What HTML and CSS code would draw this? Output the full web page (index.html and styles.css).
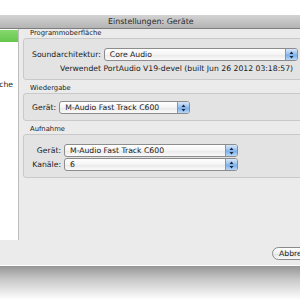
FILE: index.html
```html
<!DOCTYPE html>
<html>
<head>
<meta charset="utf-8">
<link rel="stylesheet" href="styles.css">
</head>
<body>
<div class="window">
  <div class="titlebar">Einstellungen: Geräte</div>
  <div class="body">
    <div class="sidebar">
      <div class="side-item selected"></div>
      <div class="side-item">Benutzeroberfläche</div>
    </div>
    <div class="main">
      <div class="group-label first">Programmoberfläche</div>
      <div class="group g1">
        <div class="row r1">
          <span class="lbl">Soundarchitektur:</span>
          <div class="popup w1"><span class="val">Core Audio</span><span class="stepper"><svg width="5" height="8" viewBox="0 0 5 8"><path d="M0.5 3 L2.5 0.5 L4.5 3 Z M0.5 5 L2.5 7.5 L4.5 5 Z" fill="#1a2a40"/></svg></span></div>
        </div>
        <div class="info">Verwendet PortAudio V19-devel (built Jun 26 2012 03:18:57)</div>
      </div>
      <div class="group-label">Wiedergabe</div>
      <div class="group g2">
        <div class="row r2">
          <span class="lbl">Gerät:</span>
          <div class="popup w2"><span class="val">M-Audio Fast Track C600</span><span class="stepper"><svg width="5" height="8" viewBox="0 0 5 8"><path d="M0.5 3 L2.5 0.5 L4.5 3 Z M0.5 5 L2.5 7.5 L4.5 5 Z" fill="#1a2a40"/></svg></span></div>
        </div>
      </div>
      <div class="group-label">Aufnahme</div>
      <div class="group g3">
        <div class="grid">
          <span class="lbl">Gerät:</span>
          <div class="popup w3"><span class="val">M-Audio Fast Track C600</span><span class="stepper"><svg width="5" height="8" viewBox="0 0 5 8"><path d="M0.5 3 L2.5 0.5 L4.5 3 Z M0.5 5 L2.5 7.5 L4.5 5 Z" fill="#1a2a40"/></svg></span></div>
          <span class="lbl">Kanäle:</span>
          <div class="popup w3"><span class="val">6</span><span class="stepper"><svg width="5" height="8" viewBox="0 0 5 8"><path d="M0.5 3 L2.5 0.5 L4.5 3 Z M0.5 5 L2.5 7.5 L4.5 5 Z" fill="#1a2a40"/></svg></span></div>
        </div>
      </div>
    </div>
  </div>
  <div class="footer">
    <div class="button">Abbrechen</div>
  </div>
</div>
<div class="shadow"></div>
</body>
</html>
```
FILE: styles.css
```css
html, body {
  margin: 0;
  padding: 0;
  background: #ffffff;
  overflow: hidden;
  width: 300px;
  height: 300px;
}
body {
  font-family: "DejaVu Sans", "Liberation Sans", sans-serif;
  font-size: 7.7px;
  color: #1a1a1a;
}
.window {
  margin-top: 15px;
  width: 420px;
  height: 250px;
  background: #ebebeb;
  border-bottom: 1px solid #ffffff;
  display: flex;
  flex-direction: column;
}
.titlebar {
  height: 14px;
  box-sizing: border-box;
  background: linear-gradient(#d3d3d3, #b4b4b4);
  border-bottom: 1px solid #7e7e7e;
  font-size: 7.9px;
  line-height: 13px;
  color: #2a2a2a;
  padding-left: 108px;
  white-space: nowrap;
}
.body {
  display: flex;
  height: 211px;
}
.sidebar {
  width: 18px;
  background: #ffffff;
  border-right: 1px solid #bdbdbd;
  overflow: hidden;
  padding-top: 1px;
  flex: none;
}
.side-item {
  height: 12px;
  white-space: nowrap;
  direction: rtl;
  text-align: right;
  padding-right: 5px;
  line-height: 12px;
}
.side-item + .side-item {
  margin-top: 37px;
}
.side-item.selected {
  background: linear-gradient(#86d86e, #65c64c);
}
.main {
  flex: 1;
  padding-left: 4px;
}
.group-label {
  font-size: 6.8px;
  line-height: 8px;
  padding: 4px 0 1px 7px;
  color: #222;
  white-space: nowrap;
}
.group-label.first {
  padding-top: 0;
}
.group {
  background: #e3e3e3;
  border: 1px solid #c9c9c9;
  border-radius: 3px;
}
.g1 { height: 40px; }
.g2 { height: 26px; }
.g3 { height: 42px; }
.row {
  display: flex;
  align-items: center;
  gap: 3px;
  margin-top: 9px;
  white-space: nowrap;
}
.r1 { padding-left: 8px; }
.r2 { padding-left: 8px; margin-top: 7px; }
.info {
  margin-top: 3px;
  padding-left: 36px;
  line-height: 9px;
  white-space: nowrap;
}
.grid {
  display: grid;
  grid-template-columns: 37px auto;
  column-gap: 3px;
  row-gap: 1px;
  margin-top: 9px;
  justify-content: start;
  align-items: center;
}
.grid .lbl {
  text-align: right;
  white-space: nowrap;
}
.popup {
  height: 13px;
  box-sizing: border-box;
  border: 1px solid #8c8c8c;
  border-radius: 3px;
  background: linear-gradient(#ffffff, #f4f4f4 50%, #e9e9e9 55%, #fbfbfb);
  display: flex;
  align-items: center;
  overflow: hidden;
}
.val {
  flex: 1;
  padding-left: 5px;
  line-height: 11px;
  white-space: nowrap;
}
.stepper {
  width: 11px;
  height: 11px;
  flex: none;
  border-left: 1px solid #7b97bf;
  background: linear-gradient(#d6e6fa, #9dc2ee 45%, #7aaee9 55%, #b9d7f8);
  display: flex;
  align-items: center;
  justify-content: center;
}
.w1 { width: 194px; }
.w2 { width: 131px; }
.w3 { width: 174px; }
.footer {
  flex: 1;
  display: flex;
  align-items: flex-start;
  padding-top: 7px;
  padding-left: 272px;
}
.button {
  height: 13px;
  box-sizing: border-box;
  border: 1px solid #8a8a8a;
  border-radius: 7px;
  background: linear-gradient(#ffffff, #f0f0f0 50%, #e4e4e4 55%, #fafafa);
  padding: 0 6px;
  line-height: 11px;
  white-space: nowrap;
}
.shadow {
  height: 34px;
  background: linear-gradient(#959595, #c9c9c9 40%, #ffffff);
}
```
